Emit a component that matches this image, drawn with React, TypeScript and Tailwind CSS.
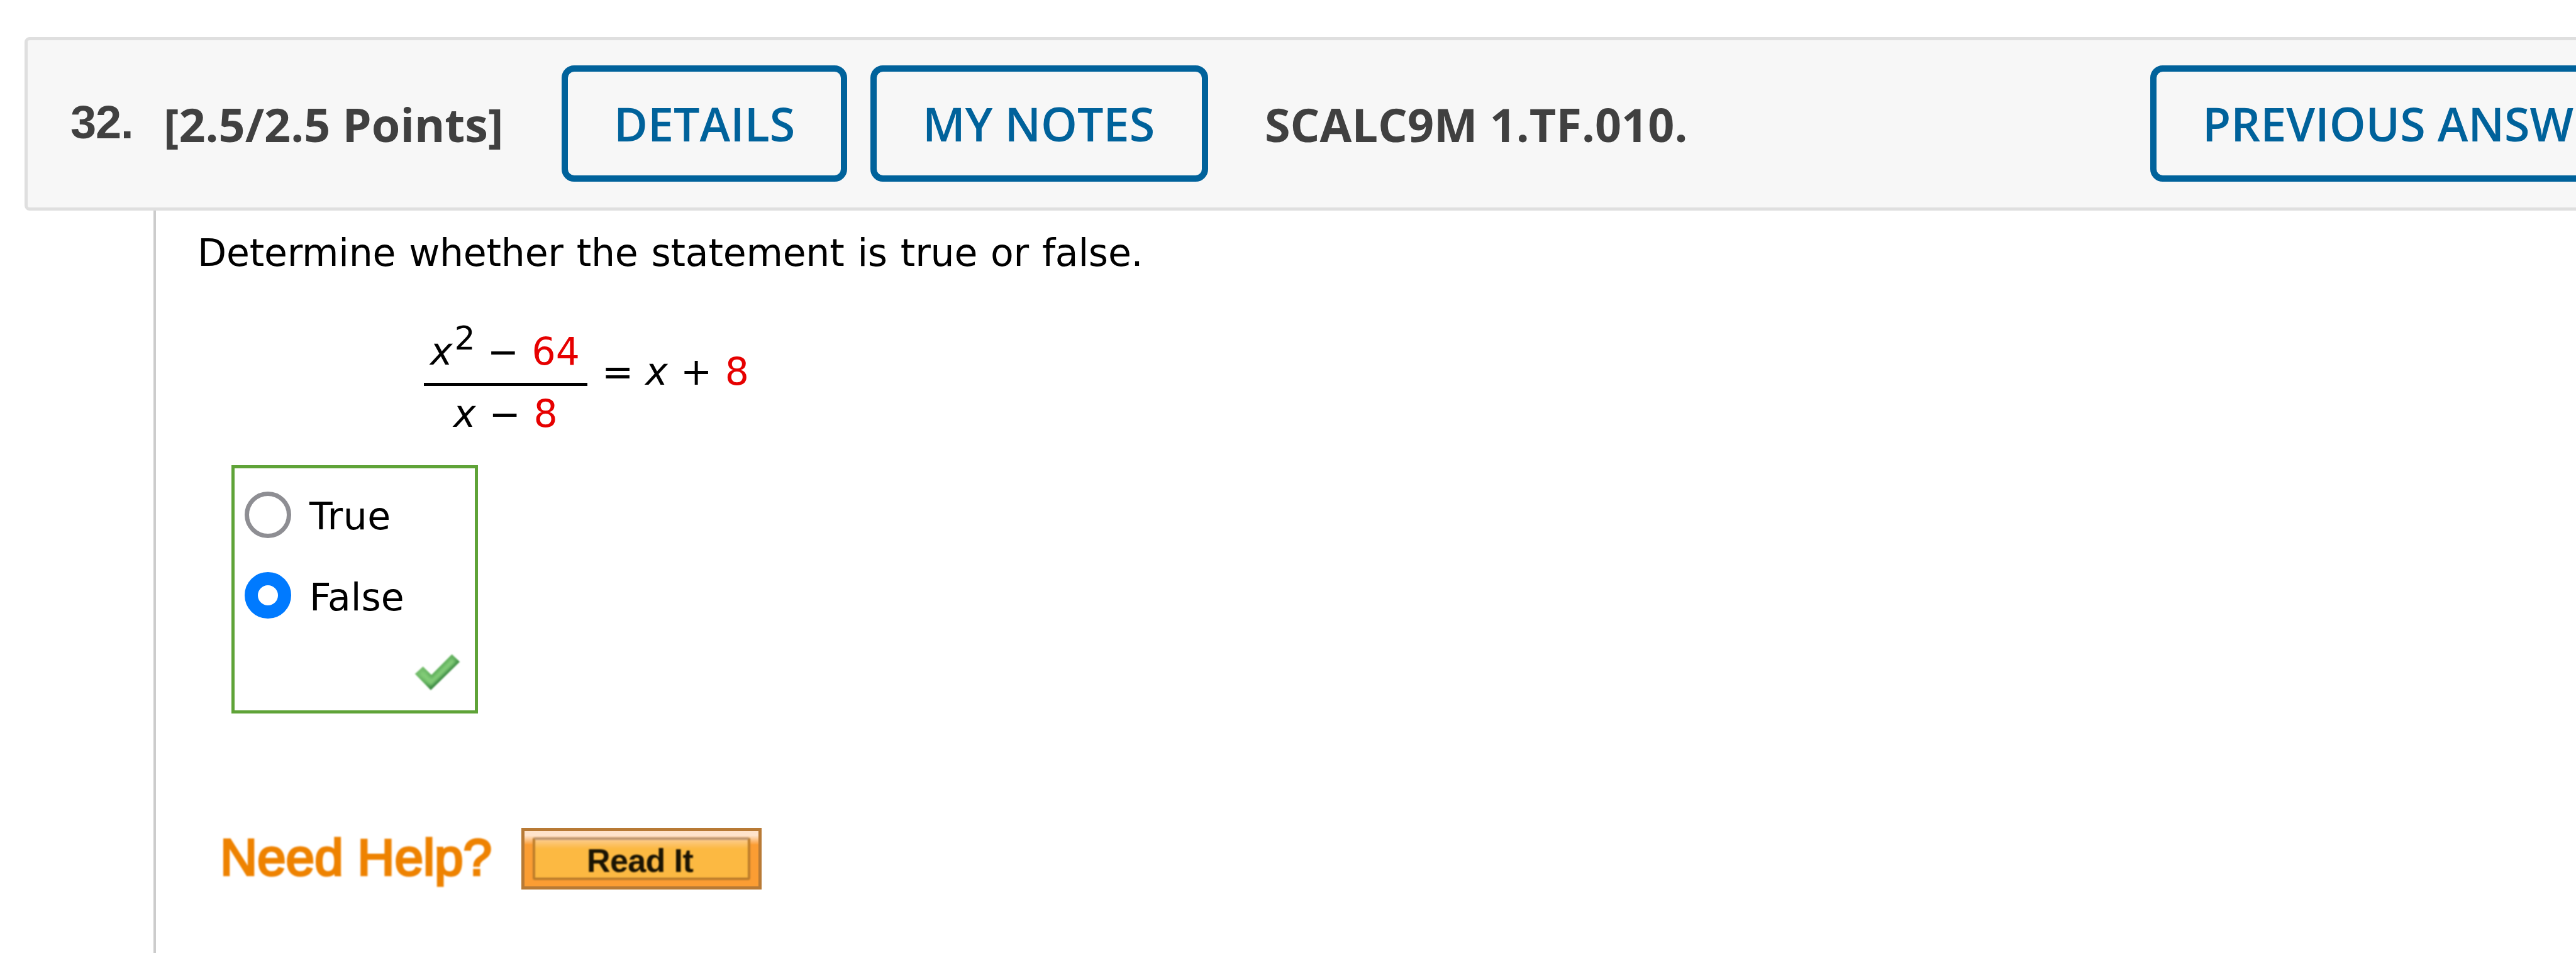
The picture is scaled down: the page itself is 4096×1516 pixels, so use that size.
function HeaderButton({ label, className }: { label: string; className: string }) {
  return (
    <button
      className={`flex h-[185px] shrink-0 items-start rounded-[20px] border-[10px] border-[#00629b] pt-[33px] pl-[73px] text-left text-[73.6px] leading-[100px] font-semibold whitespace-nowrap text-[#00629b] ${className}`}
    >
      {label}
    </button>
  );
}

function Var({ className = "" }: { className?: string }) {
  return <i className={className}>x</i>;
}

function Num({ children }: { children: string }) {
  return <span className="ml-[1.5px] text-[#e60000]">{children}</span>;
}

function Choice({ label, checked, className }: { label: string; checked?: boolean; className: string }) {
  return (
    <label className="flex h-[74px] items-center">
      <span
        className={
          checked
            ? "size-[74px] rounded-full border-[21px] border-[#007aff] bg-white"
            : "size-[74px] rounded-full border-[7px] border-[#8e8e93] bg-white"
        }
      />
      <span className={`ml-[29px] text-[60px] leading-[74px] ${className}`}>{label}</span>
    </label>
  );
}

function CheckMark() {
  const shape = "M1 33 L13.6 21.6 L27 34.7 L59.5 2 L72 13.8 L26 58.7 Z";
  return (
    <svg className="mt-[55px] ml-[270px] h-[60px] w-[74px] overflow-visible blur-[1px]" viewBox="0 0 74 60">
      <defs>
        <clipPath id="check-clip">
          <path d={shape} />
        </clipPath>
        <linearGradient id="check-edge" gradientUnits="userSpaceOnUse" x1="22" y1="16" x2="44" y2="42">
          <stop offset="0" stopColor="#74bd6c" />
          <stop offset="0.6" stopColor="#5fae5c" />
          <stop offset="1" stopColor="#378540" />
        </linearGradient>
        <filter id="check-soft">
          <feGaussianBlur stdDeviation="2" />
        </filter>
      </defs>
      <path d={shape} fill="#83cd78" />
      <g clipPath="url(#check-clip)">
        <path d={shape} fill="none" stroke="url(#check-edge)" strokeWidth="9" filter="url(#check-soft)" />
      </g>
    </svg>
  );
}

export default function App() {
  return (
    <div className="h-[1516px] w-[4096px] overflow-hidden bg-white pt-[59px] font-['DejaVu_Sans',sans-serif] text-black">
      <header className="ml-[39px] flex h-[276px] w-[4200px] items-start rounded-[8px] border-[5px] border-[#dfdfdf] bg-[#f7f7f7] pt-[40px] font-['Open_Sans',sans-serif] text-[73.7px] leading-[100px] font-bold text-[#404040]">
        <span className="mt-[49px] ml-[68px] w-[148px] shrink-0 font-['Liberation_Sans',sans-serif] text-[74px] leading-[84px] tracking-[-1.2px] whitespace-nowrap">
          32.
        </span>
        <span className="mt-[44px] w-[633px] shrink-0 whitespace-nowrap">[2.5/2.5 Points]</span>
        <HeaderButton label="DETAILS" className="w-[454px]" />
        <HeaderButton label="MY NOTES" className="ml-[37px] w-[537px]" />
        <span className="mt-[44px] ml-[90px] w-[1408px] shrink-0 whitespace-nowrap">SCALC9M 1.TF.010.</span>
        <HeaderButton label="PREVIOUS ANSW" className="w-[780px]" />
      </header>

      <main className="ml-[244px] h-[1181px] border-l-4 border-[#ccc] pl-[66px]">
        <p className="pt-[30px] text-[60px] leading-[74px] tracking-[-0.22px] whitespace-nowrap [word-spacing:2.1px]">
          Determine whether the statement is true or false.
        </p>

        <div className="mt-[74px] ml-[360px] flex h-[186px] items-start text-[60px] leading-[74px] whitespace-nowrap">
          <div className="w-[260px]">
            <div className="h-[96px] pt-[9px] pl-[10px]">
              <Var className="mr-[3px]" />
              <span className="relative -top-[24px] text-[52px] leading-[0]">2</span> − <Num>64</Num>
            </div>
            <div className="h-[5px] w-full bg-black" />
            <div className="pt-[7px] pl-[47px]">
              <Var className="mr-[2px]" /> − <Num>8</Num>
            </div>
          </div>
          <div className="ml-[23px] pt-[41px]">
            = <Var className="mr-px" /> + <Num>8</Num>
          </div>
        </div>

        <div className="mt-[41px] ml-[54px] flex h-[395px] w-[392px] flex-col border-[5px] border-[#5fa338] pt-[37px] pl-[16px]">
          <Choice label="True" className="pt-[4px] tracking-[0.6px]" />
          <div className="h-[54px]" />
          <Choice label="False" checked className="pt-[6px]" />
          <CheckMark />
        </div>

        <div className="mt-[182px] ml-[36px] flex items-start">
          <span className="w-[479px] pt-[2px] font-['Liberation_Sans',sans-serif] text-[82px] leading-[90px] tracking-[-0.1px] whitespace-nowrap text-[#ee8200] blur-[1.2px] [-webkit-text-stroke:3.5px_#ee8200]">
            Need Help?
          </span>
          <button className="h-[98px] w-[382px] border-[5px] border-[#b87a35] bg-[linear-gradient(to_bottom,#ffe2c9_0px,#ffe4cc_7px,#fb9d33_22px)] pt-[10px] pr-[13px] pb-[10px] pl-[13px]">
            <span className="block h-[68px] rounded-[4px] border-4 border-[#bd7d2a] border-t-[#bd9670] bg-[linear-gradient(to_bottom,#fccb8a_0px,#fcb942_14px)] pt-[3px] pl-[82px] text-left font-['Liberation_Sans',sans-serif] text-[52px] leading-[60px] font-bold tracking-[-0.6px] whitespace-nowrap text-[#191303] blur-[1px]">
              Read It
            </span>
          </button>
        </div>
      </main>
    </div>
  );
}
